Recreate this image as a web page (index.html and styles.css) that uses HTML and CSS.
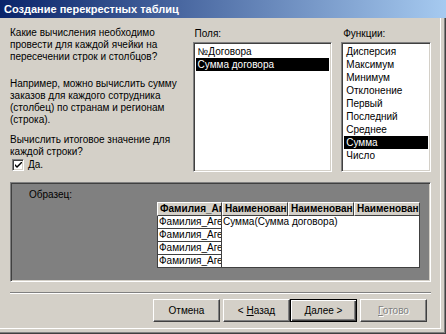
FILE: index.html
```html
<!DOCTYPE html>
<html>
<head>
<meta charset="utf-8">
<link rel="stylesheet" href="styles.css">
</head>
<body>
<div class="window">
  <div class="titlebar">Создание перекрестных таблиц</div>
  <div class="content">
    <div class="top">
      <div class="question">
        <p class="first">Какие вычисления необходимо<br>провести для каждой ячейки на<br>пересечении строк и столбцов?</p>
        <p class="second">Например, можно вычислить сумму<br>заказов для каждого сотрудника<br>(столбец) по странам и регионам<br>(строка).</p>
        <p class="last">Вычислить итоговое значение для<br>каждой строки?</p>
        <label class="check">
          <span class="box"><svg width="7" height="7" viewBox="0 0 7 7"><path d="M0 2 L0 4 L2 6 L7 1 L7 -1 L2 4 Z" fill="#000"/></svg></span>
          <span>Да.</span>
        </label>
      </div>
      <div class="col fields">
        <div class="label">Поля:</div>
        <div class="listbox">
          <div class="item">№Договора</div>
          <div class="item sel">Сумма договора</div>
        </div>
      </div>
      <div class="col funcs">
        <div class="label">Функции:</div>
        <div class="listbox">
          <div class="item">Дисперсия</div>
          <div class="item">Максимум</div>
          <div class="item">Минимум</div>
          <div class="item">Отклонение</div>
          <div class="item">Первый</div>
          <div class="item">Последний</div>
          <div class="item">Среднее</div>
          <div class="item sel">Сумма</div>
          <div class="item">Число</div>
        </div>
      </div>
    </div>
    <div class="sample">
      <div class="sample-label">Образец:</div>
      <div class="grid">
        <div class="hdr">
          <div class="hcell">Фамилия_Агента</div>
          <div class="hcell">Наименование</div>
          <div class="hcell">Наименование</div>
          <div class="hcell">Наименование</div>
        </div>
        <div class="body">
          <div class="rows">
            <div class="rcell">Фамилия_Агента1</div>
            <div class="rcell">Фамилия_Агента2</div>
            <div class="rcell">Фамилия_Агента3</div>
            <div class="rcell">Фамилия_Агента4</div>
          </div>
          <div class="values">Сумма(Сумма договора)</div>
        </div>
      </div>
    </div>
    <div class="separator"></div>
    <div class="buttons">
      <button class="btn">Отмена</button>
      <div class="pair">
        <button class="btn">&lt; <u>Н</u>азад</button>
        <button class="btn default"><u>Д</u>алее &gt;</button>
      </div>
      <button class="btn disabled"><u>Г</u>отово</button>
    </div>
  </div>
</div>
</body>
</html>
```
FILE: styles.css
```css
* { box-sizing: border-box; }
html, body { margin: 0; padding: 0; }
body {
  width: 446px;
  height: 334px;
  overflow: hidden;
  font-family: "Liberation Sans", Arial, sans-serif;
  font-size: 10px;
  color: #000;
  background: #d4d0c8;
}
.window {
  width: 446px;
  height: 334px;
  display: flex;
  flex-direction: column;
  background: #d4d0c8;
  border-right: 1px solid #404040;
  border-bottom: 1px solid #404040;
  box-shadow: inset -1px -1px 0 #808080, inset -4px -4px 0 #d4d0c8, inset -5px -5px 0 #ffffff;
}
.titlebar {
  height: 18px;
  flex: none;
  background: linear-gradient(to right, #0a246a, #a6caf0);
  color: #fff;
  font-weight: bold;
  font-size: 11px;
  line-height: 18px;
  padding-left: 4px;
  margin-right: -1px;
}
.content {
  flex: 1;
  padding: 9px 14px 0 10px;
  display: flex;
  flex-direction: column;
}
.top {
  display: flex;
  height: 155px;
  flex: none;
}
.question {
  width: 183px;
  line-height: 12px;
}
.question p { margin: 0; white-space: nowrap; }
.question p.first { margin-bottom: 15px; }
.question p.second { margin-bottom: 8px; }
.question p.last { margin-bottom: 1px; }
.check {
  display: flex;
  align-items: center;
  gap: 4px;
  padding-left: 2px;
}
.box {
  width: 12px;
  height: 12px;
  background: #fff;
  border-top: 1px solid #808080;
  border-left: 1px solid #808080;
  border-right: 1px solid #fff;
  border-bottom: 1px solid #fff;
  box-shadow: inset 1px 1px 0 #404040, inset -1px -1px 0 #d4d0c8;
  display: flex;
  align-items: center;
  justify-content: center;
}
.box svg { display: block; }
.col { display: flex; flex-direction: column; }
.label { line-height: 13px; padding-left: 2px; height: 15px; }
.fields { width: 140px; margin-right: 9px; }
.funcs { width: 90px; }
.listbox {
  height: 130px;
  background: #fff;
  border-top: 1px solid #808080;
  border-left: 1px solid #808080;
  border-right: 1px solid #fff;
  border-bottom: 1px solid #fff;
  box-shadow: inset 1px 1px 0 #404040, inset -1px -1px 0 #d4d0c8;
  padding: 2px 2px;
}
.item {
  line-height: 13px;
  height: 13px;
  padding-left: 2px;
  white-space: nowrap;
}
.item.sel { background: #000; color: #fff; }
.sample {
  height: 100px;
  flex: none;
  background: #808080;
  border-top: 1px solid #808080;
  border-left: 1px solid #808080;
  border-right: 1px solid #fff;
  border-bottom: 1px solid #fff;
  box-shadow: inset 1px 1px 0 #404040, inset -1px -1px 0 #d4d0c8;
  padding: 5px 0 0 18px;
}
.sample-label { line-height: 13px; height: 13px; }
.grid { margin-left: 128px; margin-top: 1px; width: 263px; }
.hdr { display: flex; }
.hcell {
  width: 66px;
  height: 14px;
  line-height: 12px;
  font-weight: bold;
  background: #d4d0c8;
  border-top: 1px solid #fff;
  border-left: 1px solid #fff;
  border-right: 1px solid #404040;
  border-bottom: 1px solid #404040;
  overflow: hidden;
  white-space: nowrap;
  padding-left: 2px;
}
.hcell:first-child { width: 65px; }
.body { display: flex; }
.rows { width: 65px; }
.rcell {
  height: 13px;
  line-height: 11px;
  background: #fff;
  border: 1px solid #404040;
  border-top: none;
  overflow: hidden;
  white-space: nowrap;
  padding-left: 1px;
}
.values {
  flex: 1;
  height: 52px;
  background: #fff;
  border-right: 1px solid #404040;
  border-bottom: 1px solid #404040;
  line-height: 12px;
  padding-left: 1px;
  white-space: nowrap;
}
.separator {
  margin-top: 10px;
  height: 2px;
  flex: none;
  border-top: 1px solid #808080;
  border-bottom: 1px solid #fff;
}
.buttons {
  display: flex;
  justify-content: flex-end;
  gap: 3px;
  margin-top: 5px;
  padding-right: 4px;
}
.pair { display: flex; }
.btn {
  font-family: "Liberation Sans", Arial, sans-serif;
  font-size: 10px;
  width: 67px;
  height: 23px;
  padding: 0;
  margin: 0;
  background: #d4d0c8;
  color: #000;
  border-top: 1px solid #fff;
  border-left: 1px solid #fff;
  border-right: 1px solid #404040;
  border-bottom: 1px solid #404040;
  box-shadow: inset -1px -1px 0 #808080;
}
.btn.default {
  border: 1px solid #000;
  box-shadow: inset 1px 1px 0 #fff, inset -1px -1px 0 #404040, inset -2px -2px 0 #808080;
}
.btn.disabled {
  color: #808080;
  text-shadow: 1px 1px 0 #fff;
}
```
